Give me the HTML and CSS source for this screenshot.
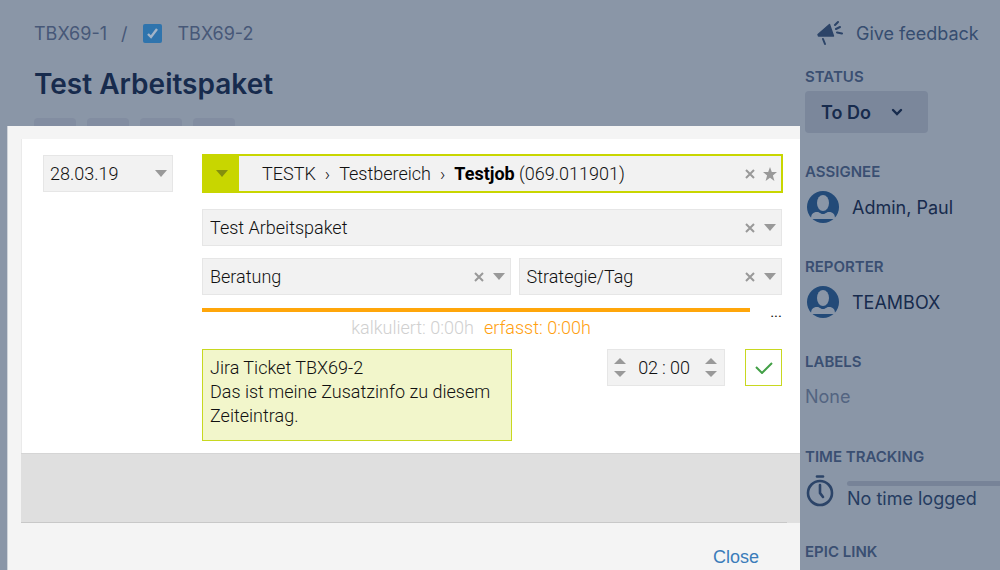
FILE: index.html
```
<!DOCTYPE html>
<html lang="de">
  <head>
    <meta charset="utf-8">
    <meta name="viewport" content="width=device-width, initial-scale=1">
    <title>Test Arbeitspaket</title>
    <link rel="stylesheet" href="styles.css">
  </head>
  <body>
    <div class="page">
      <main class="issue">
        <nav class="crumbs">
          <a href="#">TBX69-1</a>
          <span class="slash">/</span>
          <svg class="task-icon" width="19" height="19" viewBox="0 0 19 19">
            <rect width="19" height="19" rx="2" fill="#2f74ad"/>
            <path d="M5 10l3 3 6-8" fill="none" stroke="#a3b4c8" stroke-width="2.4"/>
          </svg>
          <a href="#">TBX69-2</a>
        </nav>
        <h1>Test Arbeitspaket</h1>
        <div class="pills"><span></span><span></span><span></span><span></span></div>

        <!-- time entry dialog, lies over the issue -->
        <div class="dialog" role="dialog" aria-label="Zeiteintrag">
          <form class="entry">
            <div class="field date">
              <select aria-label="Datum"><option>28.03.19</option></select>
              <svg class="arrow" width="12" height="7" viewBox="0 0 12 7"><path d="M0 0h12L6 7z"/></svg>
            </div>

            <div class="fields">
              <div class="job">
                <button type="button" class="job-toggle" aria-label="Job wählen">
                  <svg class="arrow" width="12" height="7" viewBox="0 0 12 7"><path d="M0 0h12L6 7z"/></svg>
                </button>
                <div class="job-path"><span>TESTK</span><span>›</span><span>Testbereich</span><span>›</span><span><b>Testjob</b> (069.011901)</span></div>
                <button type="button" class="clear" aria-label="Leeren">
                  <svg width="10" height="10" viewBox="0 0 10 10"><path d="M1 1l8 8M9 1l-8 8"/></svg>
                </button>
                <button type="button" class="star" aria-label="Favorit">
                  <svg width="14" height="14" viewBox="0 0 14 14"><path d="M7 0l1.8 4.9 5.2.2-4.1 3.3L11.4 14 7 10.8 2.6 14l1.5-5.6L0 5.1l5.2-.2z"/></svg>
                </button>
              </div>

              <div class="field">
                <select aria-label="Arbeitspaket"><option>Test Arbeitspaket</option></select>
                <button type="button" class="clear" aria-label="Leeren">
                  <svg width="10" height="10" viewBox="0 0 10 10"><path d="M1 1l8 8M9 1l-8 8"/></svg>
                </button>
                <svg class="arrow" width="12" height="7" viewBox="0 0 12 7"><path d="M0 0h12L6 7z"/></svg>
              </div>

              <div class="split">
                <div class="field">
                  <select aria-label="Leistung"><option>Beratung</option></select>
                  <button type="button" class="clear" aria-label="Leeren">
                    <svg width="10" height="10" viewBox="0 0 10 10"><path d="M1 1l8 8M9 1l-8 8"/></svg>
                  </button>
                  <svg class="arrow" width="12" height="7" viewBox="0 0 12 7"><path d="M0 0h12L6 7z"/></svg>
                </div>
                <div class="field">
                  <select aria-label="Tarif"><option>Strategie/Tag</option></select>
                  <button type="button" class="clear" aria-label="Leeren">
                    <svg width="10" height="10" viewBox="0 0 10 10"><path d="M1 1l8 8M9 1l-8 8"/></svg>
                  </button>
                  <svg class="arrow" width="12" height="7" viewBox="0 0 12 7"><path d="M0 0h12L6 7z"/></svg>
                </div>
              </div>

              <div class="budget">
                <div class="budget-bar"></div>
                <button type="button" class="more" aria-label="Mehr">...</button>
              </div>
              <div class="sums"><span>kalkuliert: 0:00h</span><span class="booked">erfasst: 0:00h</span></div>

              <div class="bottom">
                <textarea aria-label="Zusatzinfo">Jira Ticket TBX69-2
Das ist meine Zusatzinfo zu diesem Zeiteintrag.</textarea>
                <div class="time">
                  <span class="steps">
                    <button type="button" aria-label="Stunde plus"><svg width="12" height="6" viewBox="0 0 12 6"><path d="M0 6h12L6 0z"/></svg></button>
                    <button type="button" aria-label="Stunde minus"><svg width="12" height="6" viewBox="0 0 12 6"><path d="M0 0h12L6 6z"/></svg></button>
                  </span>
                  <span class="clock"><input aria-label="Stunden" value="02"><span>:</span><input aria-label="Minuten" value="00"></span>
                  <span class="steps">
                    <button type="button" aria-label="Minute plus"><svg width="12" height="6" viewBox="0 0 12 6"><path d="M0 6h12L6 0z"/></svg></button>
                    <button type="button" aria-label="Minute minus"><svg width="12" height="6" viewBox="0 0 12 6"><path d="M0 0h12L6 6z"/></svg></button>
                  </span>
                </div>
                <button type="button" class="save" aria-label="Speichern">
                  <svg width="18" height="12" viewBox="0 0 18 12"><path d="M1 5l6 6L17 1" fill="none" stroke="#43a047" stroke-width="2"/></svg>
                </button>
              </div>
            </div>
          </form>
          <div class="strip"></div>
          <div class="dialog-foot"><button type="button" class="close">Close</button></div>
        </div>
      </main>

      <aside class="side">
        <a href="#" class="feedback">
          <svg width="26" height="26" viewBox="0 0 26 26" fill="none" stroke="#2c4468" stroke-width="2" stroke-linecap="round" stroke-linejoin="round">
            <path d="M1 14.500L12.500 4.500l4 11.500H1.500z" fill="#2c4468" stroke-width="1.400"/>
            <path d="M6 19l2 5M18 5l3-3M19 9l4-2M20 12.500l5 1"/>
          </svg>
          Give feedback
        </a>
        <section>
          <h2>STATUS</h2>
          <button type="button" class="status">To Do
            <svg width="12" height="8" viewBox="0 0 12 8"><path d="M2 2l4 4 4-4" fill="none" stroke="#172b4d" stroke-width="2.4" stroke-linecap="round"/></svg>
          </button>
        </section>
        <section>
          <h2>ASSIGNEE</h2>
          <div class="person">
            <svg width="32" height="32" viewBox="0 0 32 32">
              <circle cx="16" cy="16" r="16" fill="#234a78"/>
              <ellipse cx="16" cy="12" rx="6" ry="8" fill="#8a96a7"/>
              <path d="M4 28c0-5 2-7 6-7 3 0 3 2 6 2s3-2 6-2c4 0 6 2 6 7z" fill="#8a96a7"/>
            </svg>
            Admin, Paul
          </div>
        </section>
        <section>
          <h2>REPORTER</h2>
          <div class="person">
            <svg width="32" height="32" viewBox="0 0 32 32">
              <circle cx="16" cy="16" r="16" fill="#234a78"/>
              <ellipse cx="16" cy="12" rx="6" ry="8" fill="#8a96a7"/>
              <path d="M4 28c0-5 2-7 6-7 3 0 3 2 6 2s3-2 6-2c4 0 6 2 6 7z" fill="#8a96a7"/>
            </svg>
            TEAMBOX
          </div>
        </section>
        <section>
          <h2>LABELS</h2>
          <div class="none">None</div>
        </section>
        <section>
          <h2>TIME TRACKING</h2>
          <div class="tracking">
            <svg width="28" height="32" viewBox="0 0 28 32" fill="none" stroke="#2c4468" stroke-linecap="round">
              <circle cx="14" cy="18" r="12" stroke-width="2.6"/>
              <path d="M11 1.5h6" stroke-width="2.6"/>
              <path d="M14 10v8l3 4" stroke-width="2.6"/>
            </svg>
            <div class="logged">
              <div class="track"></div>
              No time logged
            </div>
          </div>
        </section>
        <section>
          <h2>EPIC LINK</h2>
        </section>
      </aside>
    </div>
  </body>
</html>
```
FILE: styles.css
```
* {
    box-sizing: border-box;
}

body {
    margin: 0;
    background: #8a96a7;
    color: #172b4d;
    font-family: Inter, sans-serif;
    font-size: 18px;
}

a {
    color: #475878;
    text-decoration: none;
}

button, input, select, textarea {
    margin: 0;
    padding: 0;
    border: 0;
    background: none;
    color: inherit;
    font: inherit;
}

button {
    cursor: pointer;
}

svg {
    display: block;
    flex: none;
}

.page {
    display: grid;
    grid-template-columns: minmax(0, 1fr) 200px;
    height: 100vh;
    overflow: hidden;
}

/* issue behind the dialog */
.issue {
    position: relative;
    padding: 20px 34px;
}

.crumbs {
    display: flex;
    align-items: center;
    height: 26px;
    color: #475878;
}

.slash {
    margin: 0 16px 0 14px;
}

.task-icon {
    margin-right: 15px;
}

h1 {
    margin: 18px 0 14px;
    font-size: 28px;
    line-height: 40px;
    font-weight: 600;
}

.pills {
    display: flex;
    gap: 11px;
}

.pills span {
    width: 42px;
    height: 40px;
    border-radius: 4px;
    background: #828da1;
}

/* dialog */
.dialog {
    position: absolute;
    top: 126px;
    right: 0;
    bottom: 0;
    left: 7px;
    padding: 13px 0 0 13px;
    border-left: 1px solid #cfd3d9;
    background: #f4f4f4;
    color: #111;
    font-family: Roboto, sans-serif;
    font-weight: 300;
}

.entry {
    display: flex;
    gap: 29px;
    padding: 15px 18px 12px 21px;
    border-left: 1px solid #eaeaea;
    background: #fff;
}

.field {
    display: flex;
    align-items: center;
    gap: 9px;
    height: 37px;
    padding: 0 5px 0 7px;
    border: 1px solid #e6e6e6;
    background: #f2f2f2;
}

.field select {
    flex: 1;
    min-width: 0;
    appearance: none;
}

.date {
    flex: none;
    width: 130px;
    margin-top: 1px;
    padding-left: 6px;
}

.arrow, .steps svg, .star svg {
    fill: #999;
}

.clear svg {
    stroke: #999;
    stroke-width: 2;
}

.fields {
    flex: 1;
    min-width: 0;
}

.job {
    display: flex;
    align-items: center;
    height: 39px;
    margin: 0 -1px 16px 0;
    padding-right: 4px;
    border: 2px solid #c8d600;
    background: #f2f2f2;
}

.job-toggle {
    display: flex;
    align-items: center;
    justify-content: center;
    align-self: stretch;
    width: 35px;
    background: #c8d600;
}

.job-toggle .arrow {
    fill: #848f0d;
}

.job-path {
    display: flex;
    flex: 1;
    gap: 9px;
    padding-left: 23px;
    white-space: nowrap;
}

.job-path b {
    color: #000;
    font-weight: 700;
}

.star {
    margin-left: 8px;
}

.split {
    display: grid;
    grid-template-columns: 308fr 263fr;
    gap: 8px;
    margin-top: 12px;
}

.budget {
    display: flex;
    gap: 20px;
    height: 20px;
    margin-top: 13px;
}

.budget-bar {
    flex: 1;
    height: 4px;
    background: #ffa60a;
}

.more {
    align-self: flex-start;
    font-size: 15px;
    line-height: 8px;
    font-weight: 400;
}

.sums {
    display: flex;
    justify-content: center;
    gap: 10px;
    height: 21px;
    padding-right: 42px;
    color: #d0d0d0;
    line-height: 0;
}

.booked {
    color: #ffa010;
}

.bottom {
    display: flex;
    align-items: flex-start;
}

textarea {
    width: 310px;
    height: 92px;
    margin-right: auto;
    padding: 6px 7px;
    border: 1px solid #c8d820;
    background: #f2f6cb;
    line-height: 24px;
    resize: none;
}

.time {
    display: flex;
    align-items: center;
    justify-content: space-between;
    width: 118px;
    height: 37px;
    padding: 0 7px 0 6px;
    border: 1px solid #e6e6e6;
    background: #f2f2f2;
}

.steps {
    display: grid;
    gap: 7px;
}

.clock {
    display: flex;
    gap: 3px;
    padding-right: 3px;
}

.clock input {
    width: 22px;
    text-align: center;
}

.save {
    display: flex;
    align-items: center;
    justify-content: center;
    width: 37px;
    height: 37px;
    margin-left: 20px;
    border: 1px solid #c8d820;
    background: #fff;
}

.strip {
    display: flex;
    align-items: flex-end;
    height: 70px;
    border-top: 1px solid #d5d5d5;
    background: #dfdfdf;
}

/* bottom line stops short of the right edge */
.strip::after {
    content: "";
    width: calc(100% - 13px);
    height: 1px;
    background: #c8c8c8;
}

.dialog-foot {
    display: flex;
    justify-content: flex-end;
    padding: 24px 41px;
}

.close {
    color: #3b7cba;
    font: 18px "Liberation Sans", sans-serif;
}

/* right column */
.side {
    padding: 20px 0 0 5px;
}

.feedback {
    display: flex;
    align-items: center;
    gap: 13px;
    height: 26px;
    margin-bottom: 20px;
    padding-left: 12px;
    color: #364d70;
    white-space: nowrap;
}

section {
    height: 95px;
}

h2 {
    margin: 0;
    color: #3a4f72;
    font-size: 15px;
    line-height: 22px;
    font-weight: 600;
}

.status {
    display: flex;
    align-items: center;
    gap: 20px;
    height: 42px;
    margin-top: 3px;
    padding: 0 25px 0 16px;
    border-radius: 4px;
    background: #7b879b;
    font-weight: 600;
}

.person {
    display: flex;
    align-items: center;
    gap: 13px;
    margin: 8px 0 0 2px;
}

.none {
    margin-top: 13px;
    color: #536481;
}

.tracking {
    display: flex;
    gap: 13px;
    margin: 7px 0 0 1px;
    color: #253c61;
}

.logged {
    flex: 1;
    white-space: nowrap;
}

.track {
    height: 5px;
    margin: 6px 0 2px;
    border-radius: 3px 0 0 3px;
    background: #778398;
}
```
